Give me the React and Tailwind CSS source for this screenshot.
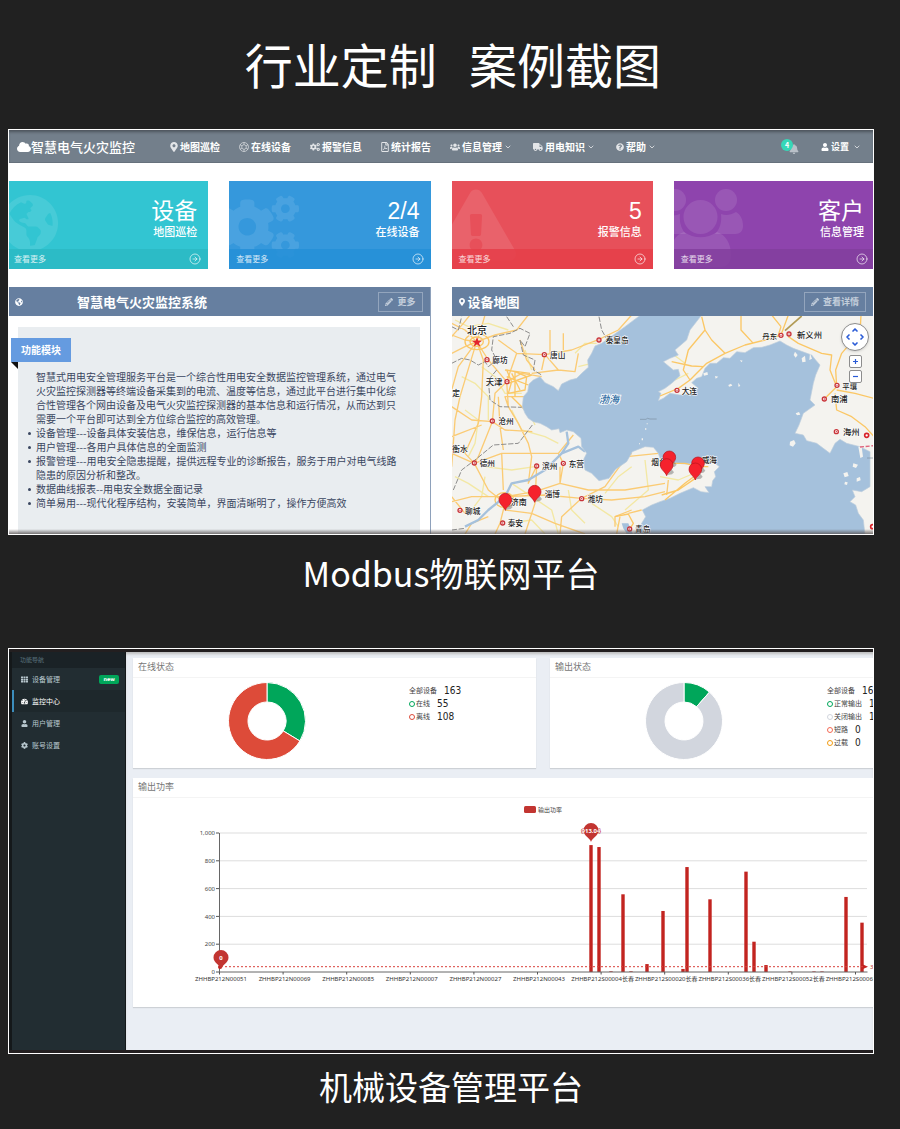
import React from "react";
import {
  FaCloud,
  FaMapMarkerAlt,
  FaCogs,
  FaRegFilePdf,
  FaUsers,
  FaTruck,
  FaQuestionCircle,
  FaBell,
  FaUser,
  FaGlobeAmericas,
  FaPencilAlt,
  FaExclamationTriangle,
  FaTh,
  FaTachometerAlt,
  FaCog,
} from "react-icons/fa";
import { ChevronDown, ChevronUp, ChevronLeft, ChevronRight, CircleArrowRight } from "lucide-react";

function LatticeIcon({ className }) {
  return (
    <svg viewBox="0 0 20 20" className={className} fill="none" stroke="currentColor" strokeWidth="1.3">
      <circle cx="10" cy="10" r="9" />
      <path d="M10 5 14.3 7.5v5L10 15l-4.3-2.5v-5ZM10 1v4M10 15v4M14.3 7.5 18 5.5M14.3 12.5l3.7 2M5.7 12.5l-3.7 2M5.7 7.5 2 5.5" />
    </svg>
  );
}

function CrowdIcon({ className }) {
  return (
    <svg viewBox="0 0 80 80" className={className} fill="currentColor">
      <circle cx="12" cy="12" r="11" />
      <circle cx="63" cy="12" r="11" />
      <circle cx="37.500" cy="29" r="17" />
      <path d="M17 26c-1 8 1 15 6 20H6c-5 0-9-3-9-8 0-6 2-11 5-13 5 3 10 3 15 1Z" />
      <path d="M58 26c5 2 10 1 15-2 5 3 7 8 7 14 0 5-3 8-8 8H52c5-5 7-12 6-20Z" />
      <path d="M21 44c10 7 23 7 33 0 9 3 14 12 14 23 0 8-4 12-11 12H18C11 79 7 75 7 67c0-11 5-20 14-23Z" />
    </svg>
  );
}

const NAV = [
  { label: "地图巡检", Icon: FaMapMarkerAlt, size: "w-2" },
  { label: "在线设备", Icon: LatticeIcon, size: "w-2.5" },
  { label: "报警信息", Icon: FaCogs, size: "w-2.5" },
  { label: "统计报告", Icon: FaRegFilePdf, size: "w-2" },
  { label: "信息管理", Icon: FaUsers, size: "w-2.5", menu: true },
  { label: "用电知识", Icon: FaTruck, size: "w-2.5", menu: true },
  { label: "帮助", Icon: FaQuestionCircle, size: "w-2", menu: true },
];

function TopBar() {
  return (
    <header className="flex h-[33px] items-center bg-[#737f8b] pl-2 pr-3 text-white shadow-[inset_0_3px_3px_-1px_#4d545c,inset_0_-1px_0_#66717c]">
      <a href="#home" className="flex items-center text-[13px] font-medium leading-5">
        <FaCloud className="h-3.5 w-3.5" />
        智慧电气火灾监控
      </a>
      <nav className="ml-[35px] flex flex-1 items-center gap-[19px] text-[10px] font-bold leading-4">
        {NAV.map(({ label, Icon, size, menu }) => (
          <a key={label} href={"#" + label} className="flex items-center whitespace-nowrap">
            <Icon className={"mr-0.5 h-2.5 text-white/80 " + size} />
            {label}
            {menu && <ChevronDown className="mx-0.5 h-2 w-2" />}
          </a>
        ))}
      </nav>
      <button aria-label="通知" className="relative mr-[22px] h-4 w-[18px]">
        <FaBell className="ml-2 mt-1 h-2.5 w-2.5 text-[#b9c0c8]" />
        <span className="absolute left-0 top-0 flex h-3 w-3 items-center justify-center rounded-full bg-[#36d7b7] text-[7px] font-bold leading-3">
          4
        </span>
      </button>
      <button className="flex items-center text-[9px] font-bold leading-4">
        <FaUser className="mr-0.5 h-2 w-2" />
        设置
        <ChevronDown className="ml-1 h-2 w-2" />
      </button>
    </header>
  );
}

const STATS = [
  { value: "设备", label: "地图巡检", Icon: FaGlobeAmericas, bg: "bg-[#32c5d2]", foot: "bg-[#2bb8c4]/85", icon: "left-[-6px] top-[13px] h-[58px] w-[58px]" },
  { value: "2/4", label: "在线设备", Icon: FaCogs, bg: "bg-[#3598dc]", foot: "bg-[#258fd7]/85", icon: "left-[-8px] top-[7px] h-[78px] w-[78px]" },
  { value: "5", label: "报警信息", Icon: FaExclamationTriangle, bg: "bg-[#e7505a]", foot: "bg-[#e53e49]/85", icon: "left-[-16px] top-[4px] h-[80px] w-[80px]" },
  { value: "客户", label: "信息管理", Icon: CrowdIcon, bg: "bg-[#8e44ad]", foot: "bg-[#823e9e]/85", icon: "left-[-11px] top-[7px] h-[80px] w-[80px]" },
];

function StatCard({ value, label, Icon, bg, foot, icon }) {
  return (
    <a href={"#" + label} className={"relative flex h-[88px] flex-col overflow-hidden text-white " + bg}>
      <Icon className={"absolute text-white/10 " + icon} />
      <div className="flex-1 pr-[11px] pt-4 text-right">
        <div className="font-['Liberation_Sans','Noto_Sans_CJK_SC',sans-serif] text-[23px] font-normal leading-7">{value}</div>
        <div className="text-[11px] font-medium leading-3">{label}</div>
      </div>
      <div className={"relative flex h-5 items-center justify-between px-[7px] text-[8px] text-white/80 " + foot}>
        查看更多
        <CircleArrowRight className="h-3 w-3" strokeWidth={1.6} />
      </div>
    </a>
  );
}

const NOTES = [
  "设备管理---设备具体安装信息，维保信息，运行信息等",
  "用户管理---各用户具体信息的全面监测",
  "报警管理---用电安全隐患提醒，提供远程专业的诊断报告，服务于用户对电气线路隐患的原因分析和整改。",
  "数据曲线报表--用电安全数据全面记录",
  "简单易用---现代化程序结构，安装简单，界面清晰明了，操作方便高效",
];

function IntroPanel() {
  return (
    <section className="flex flex-col border-r border-[#8ea1bb]">
      <div className="flex h-[29px] items-center bg-[#667fa0] pl-1.5 pr-[7px] text-white">
        <FaGlobeAmericas className="h-2 w-2" />
        <h2 className="ml-[54px] flex-1 text-[13px] font-bold leading-5">智慧电气火灾监控系统</h2>
        <button className="flex h-5 items-center gap-1 border border-[#93a5bd] px-1.5 text-[9px] font-bold text-[#c3cedb]">
          <FaPencilAlt className="h-2 w-2" />
          更多
        </button>
      </div>
      <div className="flex-1 pl-[9px] pr-2.5 pt-[11px]">
        <div className="h-full bg-[#e9edf0] pb-6 pl-[18px] pr-[22px] pt-[11px] text-[10px] leading-[14px] text-[#3a4660]">
          <div className="relative -ml-[25px] w-[60px] bg-[#659be0] text-center font-bold leading-6 text-white">
            功能模块
            <svg viewBox="0 0 7 7" className="absolute left-0 top-full h-[7px] w-[7px]">
              <path d="M0 0h7v7Z" fill="#111" />
            </svg>
          </div>
          <p className="mt-2">
            智慧式用电安全管理服务平台是一个综合性用电安全数据监控管理系统，通过电气火灾监控探测器等终端设备采集到的电流、温度等信息，通过此平台进行集中化综合性管理各个网由设备及电气火灾监控探测器的基本信息和运行情况，从而达到只需要一个平台即可达到全方位综合监控的高效管理。
          </p>
          <ul className="list-none">
            {NOTES.map((n) => (
              <li key={n} className="relative">
                <span className="absolute -left-2 top-1.5 h-[3px] w-[3px] rounded-full bg-[#3a4660]" />
                {n}
              </li>
            ))}
          </ul>
        </div>
      </div>
    </section>
  );
}

const SEA =
  "M580 20 540 50 505 75 470 100 450 108 440 130 428 150 430 172 410 190 395 205 375 210 350 222 340 242 325 230 300 218 285 200 265 210 252 222 248 245 235 260 232 290 240 310 250 325 265 335 285 340 305 350 320 360 342 356 345 368 365 360 385 365 408 385 410 410 425 430 415 450 420 480 440 490 462 512 492 505 512 478 545 455 562 425 600 410 625 412 640 430 645 445 680 458 720 462 765 460 805 455 823 470 808 485 812 500 803 512 800 530 780 530 792 548 768 545 745 533 705 550 675 565 645 575 620 585 592 600 602 620 590 640 575 660 565 675H1260L1255 630 1240 610 1232 585 1215 575 1230 560 1222 540 1250 545 1275 530V425L1245 410 1205 400 1185 388 1170 400 1155 430 1135 415 1115 400 1085 392 1075 375 1050 370 1062 345 1075 310 1110 285 1095 270 1105 220 1112 195 1125 165 1112 150 1100 135 1045 115 1025 105 1005 93 975 105 950 112 925 113 900 128 875 125 855 145 835 143 815 160 795 160 780 175 770 200 755 205 740 218 760 235 740 252 705 255 675 250 655 265 640 272 648 250 640 245 660 235 680 220 705 197 700 178 685 180 655 155 675 145 700 135 690 120 725 90 735 60 770 15H588Z";

const ROADS =
  "M20 75 60 90 95 95 150 75 215 60 250 15M20 130 60 110 95 95 110 50 120 15M95 95 40 170 20 240M95 95 75 160 45 260 30 330 20 470M95 95 130 150 185 215 230 190 290 200M185 215 150 250 142 335 100 440 88 460 20 430M88 460 130 540 180 580 165 640 150 672M88 460 60 430 100 340 110 260 115 150 95 95M20 290 80 330 142 335 180 360 262 365M20 380 110 345M185 215 190 290 220 340 250 400 260 440 250 520 275 468 270 580 240 672M88 460 170 430 340 430 355 460 345 520 430 540 540 540 660 520M20 575 80 560 180 560 270 545 345 520M180 560 300 555 410 565 500 570 600 560 660 545M410 565 350 620 345 672M410 565 480 530 545 440 560 430M180 600 260 610 330 640 420 672M130 620 80 640 60 672M60 610 20 560M185 215 215 130 300 134 380 120 462 88 520 60 560 15M300 134 340 180 390 185 400 130M340 180 260 190M215 130 160 90M300 134 290 180M315 60V130M355 70V120M225 90 245 150 270 180M170 430 175 540M160 260 165 350 175 420M190 290 180 260 250 260M20 80 55 40 75 15M20 40 60 60 95 95M340 430 385 375M345 470V520M545 440 640 430M670 510 665 555M525 620 515 672M550 610 590 600M560 600 510 620 510 650";

const ROADS_EAST =
  "M645 258 700 235 735 210 785 160 840 130 900 105 960 90 1008 75 1030 15M735 210 715 180 730 120 780 60 770 20M780 60 800 90 840 130M888 15V60L925 100M980 15 1008 50M680 155 740 168 775 170M1030 80 1060 100 1130 130 1160 135 1155 180 1175 230 1140 265M1175 230 1172 180 1190 130 1220 95 1245 70 1248 15M1175 240 1230 250 1287 265M1170 250 1175 300 1220 320 1260 350 1287 380M645 460 720 460 760 470 790 470M751 505 700 540 650 555M760 490 720 520 660 570M1008 50 1000 75";

const BYROADS =
  "M30 30 70 50 130 40 190 60M110 170 150 200 180 250 230 250M50 200 90 220 130 260 130 330M60 300 100 330 90 400 70 440M200 300 230 360 300 380 340 400M120 470 200 480 270 470M120 500 110 560 80 600M200 520 260 560 320 600 340 672M370 540 380 600 420 640M440 580 500 620 520 650M560 470 520 500 480 550M600 450 610 540 540 600M645 500 700 510 770 480M240 120 260 180M190 640 260 630 300 672M30 500 70 520 130 560M440 160 400 170M680 130 720 160M690 210 730 190M250 300 270 345M390 130 420 100 455 100";

const CITY_RING =
  "M60 95a36 24 0 1 0 72 0a36 24 0 1 0-72 0M75 95a20 14 0 1 0 40 0a20 14 0 1 0-40 0M185 180 200 215 190 250 240 240 245 200 210 185ZM200 190 225 240M185 200 250 225M210 185V260M150 570a28 22 0 1 0 56 0a28 22 0 1 0-56 0M510 620 550 612 565 640 545 672M190 220 260 195M180 180 255 190M200 260 240 300";

const BORDERS =
  "M20 160 50 145 75 150 100 165 120 155 130 170 155 150 140 120 145 80 195 70 225 55 255 70 240 110 225 90 235 135 270 150 265 180 290 195M185 20 205 50M155 180 130 210 135 270 165 290 230 292M262 345 220 400 145 405 90 450 50 480 25 540M462 20 470 60 487 90M20 660 60 655M20 50 40 60 50 20";

const CITIES = [
  ["廊坊", 142, 158, 23, 126, 149],
  ["唐山", 315, 143, 23, 298, 134],
  ["秦皇岛", 482, 100, 23, 462, 90],
  ["天津", 122, 226, 25, 186, 215],
  ["沧州", 160, 342, 23, 142, 333],
  ["德州", 104, 469, 23, 88, 459],
  ["滨州", 291, 477, 23, 275, 468],
  ["东营", 371, 470, 23, 355, 460],
  ["淄博", 299, 560, 23],
  ["济南", 197, 585, 24],
  ["潍坊", 428, 576, 23, 410, 566],
  ["聊城", 60, 611, 23, 45, 601],
  ["泰安", 188, 648, 23, 173, 639],
  ["青岛", 570, 667, 23, 554, 657],
  ["衡水", 22, 426, 23],
  ["定", 22, 258, 23],
  ["烟台", 619, 465, 23],
  ["威海", 770, 459, 23],
  ["大连", 710, 252, 23, 696, 241],
  ["丹东", 952, 88, 22, 1008, 76],
  ["新义州", 1056, 83, 25, 1032, 72],
  ["平壤", 1192, 236, 22, 1176, 226],
  ["南浦", 1158, 277, 25, 1138, 267],
  ["海州", 1194, 375, 25, 1174, 365],
];

const PINS = [
  [181, 601],
  [269, 577],
  [673, 474],
  [665, 497],
  [759, 492],
  [751, 510],
];

function SeaMap() {
  return (
    <svg
      viewBox="21 18 1266 654"
      preserveAspectRatio="xMinYMin slice"
      className="block h-[218px] w-full bg-[#f4f3ef] font-['Noto_Sans_CJK_SC',sans-serif]"
      role="img"
      aria-label="设备地图"
    >
      <rect x="0" y="0" width="1600" height="700" fill="#f4f3ef" />
      <g fill="none" strokeLinejoin="round">
        <path d={BYROADS} stroke="#f3e8a4" strokeWidth="4" />
        <path d={ROADS} stroke="#fbcb74" strokeWidth="4" />
        <path d={CITY_RING} stroke="#fbc765" strokeWidth="4" />
        <path d={BORDERS} stroke="#8d8d8d" strokeWidth="3" strokeDasharray="16 5" />
        <path d="M60 650 100 630 130 600 180 560 200 520 250 510 300 480 350 430 370 400 365 365M350 430 400 410 420 425" stroke="#a5c1dc" strokeWidth="7" />
      </g>
      <path d={SEA} fill="#a5c1dc" stroke="#bccddd" strokeWidth="2" />
      <path d="M565 675 550 640 530 640 535 655 548 675Z" fill="#a5c1dc" />
      <g fill="#f4f3ef">
        <path d="M1035 395l12-5 5 10-8 10-10-4ZM1052 310l10-4 4 8-10 2ZM1050 125l8 10-6 8-6-8ZM1070 145l10-8 2 18-10 2ZM1095 130l6 16-8 4ZM775 190l12-4 2 8-12 3ZM810 198l10 2-8 6ZM850 225l8-4 4 6-10 3ZM880 218l6 10-6 2ZM885 150l8 2-4 5ZM1195 490l12-4 4 12-12 4ZM1235 505l10-4 2 10-12 4ZM1200 515l8 2-2 8-8-2ZM1225 460l14 4-6 10-10-4ZM1240 410l10 0 4 30-8 4ZM590 385h4v6h-4ZM600 355h4v4h-4ZM582 400h3v3h-3ZM605 340h3v3h-3ZM325 222l14 4-8 6Z" />
      </g>
      <path d="M585 328h18l4-3 8 2h20M1266 444h20" stroke="#7c8fa1" strokeWidth="2" fill="none" />
      <path d="M1245 411l42-4" stroke="#e0647d" strokeWidth="4" strokeDasharray="12 5" fill="none" />
      <g fill="none" strokeLinejoin="round">
        <path d={ROADS_EAST} stroke="#fbc765" strokeWidth="4" />
        <path d="M1020 62 1070 18" stroke="#b29b55" strokeWidth="5" />
      </g>
      <path d="M96 82l4 10h11l-9 7 4 11-10-7-10 7 4-11-9-7h11Z" fill="#e2252e" />
      <text x="66" y="71" fontSize="30" fill="#222" fontWeight="500" stroke="#fff" strokeWidth="4" paintOrder="stroke">北京</text>
      {[[1265, 376], [1283, 650]].map(([x, y]) => (
        <circle key={x} cx={x} cy={y} r="6" fill="#fff" stroke="#d8232a" strokeWidth="5" />
      ))}
      {CITIES.map(([name, x, y, size, dx, dy]) => (
        <g key={name}>
          {dx !== undefined && (
            <>
              <circle cx={dx} cy={dy} r="6" fill="#fff" stroke="#c9343a" strokeWidth="4" />
              <circle cx={dx} cy={dy} r="2" fill="#c9343a" />
            </>
          )}
          <text x={x} y={y} fontSize={size} fill="#222" fontWeight="500" stroke="#fff" strokeWidth="3" paintOrder="stroke">
            {name}
          </text>
        </g>
      ))}
      <text x="462" y="278" fontSize="30" fontStyle="italic" fontWeight="500" fill="#2f6da3" stroke="#fff" strokeWidth="5" paintOrder="stroke">渤海</text>
      {PINS.map(([x, y]) => (
        <g key={x} transform={`translate(${x} ${y})`}>
          <path d="M2-2 14-20 22-10 16-4Z" fill="#666" opacity=".45" />
          <path d="M0 0C-4-12-19-18-19-32a19 19 0 0 1 38 0C19-18 4-12 0 0Z" fill="#f5222d" stroke="#b3121b" strokeWidth="2" />
        </g>
      ))}
    </svg>
  );
}

function MapPanel() {
  return (
    <section>
      <div className="flex h-[29px] items-center bg-[#667fa0] pl-1.5 pr-[7px] text-white">
        <FaMapMarkerAlt className="h-2 w-2" />
        <h2 className="ml-0.5 flex-1 text-[13px] font-bold leading-5">设备地图</h2>
        <button className="flex h-5 items-center gap-1 border border-[#93a5bd] px-1.5 text-[9px] font-bold text-[#c3cedb]">
          <FaPencilAlt className="h-2 w-2" />
          查看详情
        </button>
      </div>
      <div className="relative">
        <SeaMap />
        <div className="absolute right-1 top-[7px] flex w-7 flex-col items-center text-[#2a5bd7]">
          <div className="relative mb-1 h-7 w-7 rounded-full border border-[#8d8d8d] bg-white shadow-sm">
            <button aria-label="向上" className="absolute left-[9px] top-0.5"><ChevronUp className="h-2 w-2" strokeWidth={5} /></button>
            <button aria-label="向左" className="absolute left-0.5 top-[9px]"><ChevronLeft className="h-2 w-2" strokeWidth={5} /></button>
            <button aria-label="向右" className="absolute right-0.5 top-[9px]"><ChevronRight className="h-2 w-2" strokeWidth={5} /></button>
            <button aria-label="向下" className="absolute bottom-0.5 left-[9px]"><ChevronDown className="h-2 w-2" strokeWidth={5} /></button>
          </div>
          <button aria-label="放大" className="mb-0.5 flex h-[13px] w-[13px] items-center justify-center rounded-xs border border-[#8d8d8d] bg-white">
            <svg viewBox="0 0 7 7" className="h-[7px] w-[7px]"><path d="M1 3.5h5M3.5 1v5" stroke="#2a5bd7" strokeWidth="1.2" /></svg>
          </button>
          <button aria-label="缩小" className="flex h-[13px] w-[13px] items-center justify-center rounded-xs border border-[#8d8d8d] bg-white">
            <svg viewBox="0 0 7 7" className="h-[7px] w-[7px]"><path d="M1 3.5h5" stroke="#2a5bd7" strokeWidth="1.2" /></svg>
          </button>
        </div>
      </div>
    </section>
  );
}

function FirePlatform() {
  return (
    <div className="relative overflow-hidden border border-white bg-white">
      <TopBar />
      <div className="-mx-0.5 grid grid-cols-4 gap-[21px] pt-[18px]">
        {STATS.map((s) => (
          <StatCard key={s.label} {...s} />
        ))}
      </div>
      <div className="mt-[18px] grid grid-cols-2 gap-[21px]">
        <IntroPanel />
        <MapPanel />
      </div>
      <div className="pointer-events-none absolute inset-x-0 bottom-0 h-[5px] bg-gradient-to-b from-transparent to-[#5a5555]/80" />
    </div>
  );
}

const MENU = [
  { label: "设备管理", Icon: FaTh, badge: "new" },
  { label: "监控中心", Icon: FaTachometerAlt, active: true },
  { label: "用户管理", Icon: FaUser },
  { label: "账号设置", Icon: FaCog },
];

function Sidebar() {
  return (
    <nav className="w-[117px] shrink-0 border-l-[3px] border-r border-[#14181a] bg-[#222d32] text-[7px] text-[#b8c7ce]">
      <div className="h-4 bg-[#1a2226] pl-2 text-[6px] leading-4 text-[#5a737e]">功能导航</div>
      {MENU.map(({ label, Icon, badge, active }) => (
        <a
          key={label}
          href={"#" + label}
          className={
            "flex h-[22px] items-center border-l-2 pl-[7px] pr-1.5 " +
            (active ? "border-[#3c8dbc] bg-[#1e282c] text-white" : "border-transparent")
          }
        >
          <Icon className="mr-1 h-[7px] w-[7px]" />
          <span className="flex-1">{label}</span>
          {badge && (
            <span className="rounded-xs bg-[#00a65a] px-1 font-['DejaVu_Sans',sans-serif] text-[5px] font-bold leading-[9px] text-white">{badge}</span>
          )}
        </a>
      ))}
    </nav>
  );
}

function arc(from, to, outer, inner) {
  const p = (a, r) => `${(40 + r * Math.sin(a)).toFixed(2)} ${(40 - r * Math.cos(a)).toFixed(2)}`;
  const a = from * 2 * Math.PI;
  const b = to * 2 * Math.PI;
  const big = to - from > 0.5 ? 1 : 0;
  return `M${p(a, outer)}A${outer} ${outer} 0 ${big} 1 ${p(b, outer)}L${p(b, inner)}A${inner} ${inner} 0 ${big} 0 ${p(a, inner)}Z`;
}

function Donut({ share, rest }) {
  return (
    <svg viewBox="0 0 80 80" className="h-20 w-20 shrink-0" stroke="#fff" strokeWidth="1">
      <path d={arc(0, share, 38.5, 19)} fill="#00a65a" />
      <path d={arc(share, 1, 38.5, 19)} fill={rest} />
    </svg>
  );
}

function StatusCard({ title, share, rest, legendGap, rows, className }) {
  return (
    <section className={"h-[110px] overflow-hidden bg-white shadow-[0_1px_1px_rgba(0,0,0,0.12)] " + className}>
      <h3 className="h-5 border-b border-[#f4f4f4] pl-[5px] text-[9px] leading-[18px] text-[#777]">{title}</h3>
      <div className="flex pt-[3px]">
        <div className="shrink-0 pl-[94px]">
          <Donut share={share} rest={rest} />
        </div>
        <ul className={"shrink-0 pt-[3px] " + legendGap}>
          {rows.map(([label, count, ring]) => (
            <li key={label} className="flex h-[13px] items-center whitespace-nowrap text-[7px] text-[#444]">
              {ring && <span className={"mr-px h-1.5 w-1.5 rounded-full border " + ring} />}
              {label}
              <span className="ml-[7px] font-['DejaVu_Sans_Condensed','DejaVu_Sans',sans-serif] text-[10px] text-[#222]">{count}</span>
            </li>
          ))}
        </ul>
      </div>
    </section>
  );
}

const BARS = [
  [591, 913], [599, 899], [611, 5], [623, 559], [631, 5], [647, 57], [663, 439], [683, 22], [687, 755],
  [710, 523], [746, 722], [754, 218], [766, 50], [790, 4], [814, 4], [822, 4], [846, 540], [862, 355],
];

const DEVICES = [
  "ZHHBP212N00051", "ZHHBP212N00069", "ZHHBP212N00085", "ZHHBP212N00007", "ZHHBP212N00027", "ZHHBP212N00043",
  "ZHHBP212S00004长春", "ZHHBP212S00020长春", "ZHHBP212S00036长春", "ZHHBP212S00052长春", "ZHHBP212S00068长春",
];

function Marker({ x, y, label }) {
  return (
    <g transform={`translate(${x} ${y})`}>
      <path d="M0 0C-1-4-7.500-6-7.500-11.500a7.500 7.500 0 0 1 15 0C7.500-6 1-4 0 0Z" fill="#c23531" />
      <text y="-9" fontSize="6" fontWeight="700" fill="#fff" stroke="#c23531" strokeWidth="1" paintOrder="stroke" textAnchor="middle">{label}</text>
    </g>
  );
}

function PowerChart() {
  return (
    <svg
      viewBox="133 798 740 209"
      preserveAspectRatio="xMinYMin slice"
      className="block h-[209px] w-full font-['Noto_Sans','Noto_Sans_CJK_SC',sans-serif]"
      role="img"
      aria-label="输出功率"
    >
      <rect x="524" y="806" width="12" height="7" rx="1.500" fill="#c23531" />
      <text x="538" y="811.500" fontSize="6" fill="#444">输出功率</text>
      {[0, 200, 400, 600, 800, 1000].map((v) => {
        const y = 972 - v * 0.139;
        return (
          <g key={v}>
            {v > 0 && <path d={`M219 ${y}H867`} stroke="#ddd" />}
            <path d={`M216 ${y}H219`} stroke="#555" />
            <text x="215" y={y + 2.2} fontSize="6" fill="#444" textAnchor="end">{v.toLocaleString("en-US")}</text>
          </g>
        );
      })}
      {BARS.map(([x, v]) => (
        <rect key={x} x={x - 1.7} y={972 - v * 0.139} width="3.4" height={v * 0.139} fill="#c22420" />
      ))}
      <path d="M219.500 833V972M219 972H867.500" stroke="#666" fill="none" />
      {DEVICES.map((d, i) => (
        <g key={d}>
          <path d={`M${219.5 + i * 63.6} 972v2.500`} stroke="#555" />
          <text x={221 + i * 63.6} y="981" fontSize="6" fill="#333" textAnchor="middle">{d}</text>
        </g>
      ))}
      <path d="M221 966.700H864" stroke="#d9403b" strokeDasharray="2 2" />
      <path d="M863 964.500 868 966.700 863 969Z" fill="#c22420" />
      <circle cx="220" cy="967" r="2" fill="#c22420" />
      <text x="870" y="969" fontSize="6" fill="#c23531">36.53</text>
      <Marker x={221} y={969} label="0" />
      <Marker x={591} y={842} label="913.04" />
    </svg>
  );
}

function MachinePlatform() {
  return (
    <div className="overflow-hidden border border-white bg-[#eaeef4]">
      <div className="flex border-b-[3px] border-t-[3px] border-[#231f20]">
        <Sidebar />
        <main className="flex min-w-0 flex-1 flex-col pb-[43px] pl-[7px] pt-1.5 shadow-[inset_0_3px_3px_-1px_#bbb]">
          <div className="flex gap-3.5">
            <StatusCard
              title="在线状态"
              className="w-[403px] shrink-0"
              share={0.337}
              rest="#dd4b39"
              legendGap="ml-[102px]"
              rows={[
                ["全部设备", "163"],
                ["在线", "55", "border-[#00a65a]"],
                ["离线", "108", "border-[#dd4b39]"],
              ]}
            />
            <StatusCard
              title="输出状态"
              className="min-w-0 flex-1"
              share={0.115}
              rest="#d2d6de"
              legendGap="ml-[103px]"
              rows={[
                ["全部设备", "163"],
                ["正常输出", "19", "border-[#00a65a]"],
                ["关闭输出", "144", "border-[#d2d6de]"],
                ["短路", "0", "border-[#f56954]"],
                ["过载", "0", "border-[#f39c12]"],
              ]}
            />
          </div>
          <section className="mt-2.5 bg-white shadow-[0_1px_1px_rgba(0,0,0,0.12)]">
            <h3 className="h-5 border-b border-[#f4f4f4] pl-[5px] text-[9px] leading-[18px] text-[#777]">输出功率</h3>
            <PowerChart />
          </section>
        </main>
      </div>
    </div>
  );
}

export default function App() {
  return (
    <div className="min-h-screen bg-[#212121] pb-[19px] pl-2 pr-[26px] pt-9 font-['Noto_Sans_CJK_SC',sans-serif]">
      <h1 className="pl-6 text-center text-5xl font-normal leading-[54px] text-white">行业定制&nbsp;&nbsp; 案例截图</h1>
      <figure className="mt-[39px]">
        <FirePlatform />
        <figcaption className="mt-3.5 pl-5 text-center text-[34px] leading-[48px] text-white">Modbus物联网平台</figcaption>
      </figure>
      <figure className="mt-[51px]">
        <MachinePlatform />
        <figcaption className="mt-2 pl-5 text-center text-[33px] leading-[48px] text-white">机械设备管理平台</figcaption>
      </figure>
    </div>
  );
}
